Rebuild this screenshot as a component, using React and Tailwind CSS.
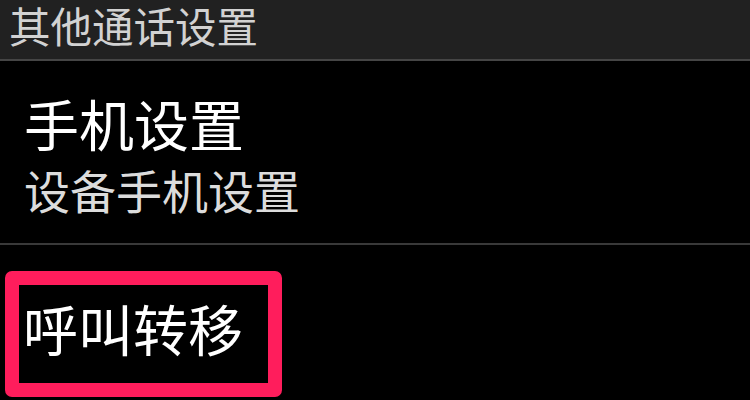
import React from 'react'

const font = { fontFamily: '"Noto Sans CJK SC", "Noto Sans", sans-serif' }

const App = () => {
    return (
        <div className="w-[750px] h-[400px] bg-black overflow-hidden flex flex-col" style={font}>
            <div className="h-[61px] shrink-0 bg-[#212121] border-b-2 border-[#454545] flex items-start pl-[9px]">
                <span className="text-[41.5px] leading-[50px] text-[#d2d2d2]">其他通话设置</span>
            </div>

            <div className="h-[184px] shrink-0 border-b-2 border-[#393939] flex flex-col pl-[24px] pt-[29px]">
                <div className="text-[55px] leading-[64px] text-white">手机设置</div>
                <div className="text-[46px] leading-[54px] text-[#dcdcdc] mt-[8px]">设备手机设置</div>
            </div>

            <div className="pt-[26px] pl-[5px]">
                <div className="w-[277px] h-[126px] border-[14px] border-[#ff1d5c] rounded-[7px] flex items-start pl-[4px] pt-[10px]">
                    <span className="text-[55px] leading-[64px] text-white">呼叫转移</span>
                </div>
            </div>
        </div>
    )
}

export default App
